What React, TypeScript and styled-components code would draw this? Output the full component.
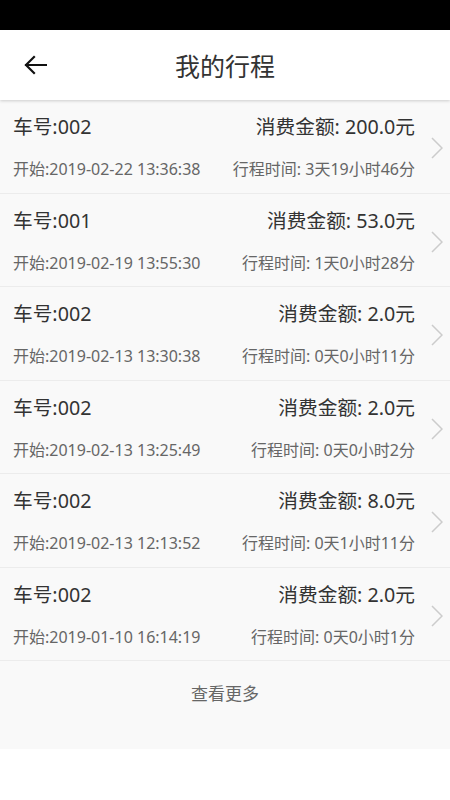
import React from "react";
import styled, { createGlobalStyle } from "styled-components";

const GlobalStyle = createGlobalStyle`
  html, body { margin: 0; padding: 0; background: #ffffff; }
  body { font-family: "Noto Sans", "Noto Sans CJK SC", sans-serif; }
  * { box-sizing: border-box; }
`;

const Page = styled.div`
  width: 450px;
  height: 800px;
  display: flex;
  flex-direction: column;
  background: #ffffff;
`;

const StatusBar = styled.div`
  height: 30px;
  background: #000000;
  flex-shrink: 0;
`;

const Header = styled.header`
  height: 70px;
  background: #ffffff;
  position: relative;
  z-index: 1;
  box-shadow: 0 1px 3px rgba(0, 0, 0, 0.18);
  display: grid;
  grid-template-columns: 70px 1fr 70px;
  align-items: center;
  flex-shrink: 0;
`;

const BackButton = styled.button`
  border: none;
  background: none;
  padding: 0 0 0 23px;
  height: 100%;
  display: flex;
  align-items: center;
  cursor: pointer;
`;

const Title = styled.h1`
  margin: 0;
  text-align: center;
  font-family: "Noto Sans", "Noto Sans CJK SC", sans-serif;
  font-weight: 400;
  font-size: 25px;
  line-height: 30px;
  color: #333333;
  padding-top: 2px;
`;

const List = styled.div`
  background: #f9f9f9;
  display: flex;
  flex-direction: column;
`;

const Row = styled.div`
  height: 93.5px;
  border-bottom: 1px solid #ececec;
  display: flex;
  align-items: center;
  padding: 0 7px 0 13px;
`;

const Info = styled.div`
  flex: 1;
  display: flex;
  flex-direction: column;
  padding-top: 2px;
`;

const Line = styled.div<{ $small?: boolean }>`
  display: flex;
  justify-content: space-between;
  align-items: center;
  font-size: ${(p) => (p.$small ? "16px" : "19.7px")};
  color: ${(p) => (p.$small ? "#666666" : "#333333")};
  height: ${(p) => (p.$small ? "26px" : "30px")};
  line-height: ${(p) => (p.$small ? "26px" : "30px")};
  margin-top: ${(p) => (p.$small ? "14px" : "0")};
  white-space: nowrap;
`;

const Chevron = styled.div`
  width: 20px;
  display: flex;
  justify-content: flex-end;
  margin-left: 8px;
  padding-top: 4px;
`;

const More = styled.div`
  height: 88px;
  display: flex;
  justify-content: center;
  padding-top: 21px;
  font-size: 17px;
  line-height: 24px;
  color: #666666;
`;

type Trip = { car: string; fee: string; start: string; dur: string };

const trips: Trip[] = [
  { car: "002", fee: "200.0", start: "2019-02-22 13:36:38", dur: "3天19小时46分" },
  { car: "001", fee: "53.0", start: "2019-02-19 13:55:30", dur: "1天0小时28分" },
  { car: "002", fee: "2.0", start: "2019-02-13 13:30:38", dur: "0天0小时11分" },
  { car: "002", fee: "2.0", start: "2019-02-13 13:25:49", dur: "0天0小时2分" },
  { car: "002", fee: "8.0", start: "2019-02-13 12:13:52", dur: "0天1小时11分" },
  { car: "002", fee: "2.0", start: "2019-01-10 16:14:19", dur: "0天0小时1分" },
];

export default function App() {
  return (
    <Page>
      <GlobalStyle />
      <StatusBar />
      <Header>
        <BackButton aria-label="back">
          <svg width="24" height="20" viewBox="0 0 24 20">
            <path
              d="M23 10H3M11 2L3 10L11 18"
              fill="none"
              stroke="#111"
              strokeWidth="2.2"
              strokeLinecap="square"
            />
          </svg>
        </BackButton>
        <Title>我的行程</Title>
        <div />
      </Header>
      <List>
        {trips.map((t, i) => (
          <Row key={i}>
            <Info>
              <Line>
                <span>车号:{t.car}</span>
                <span>消费金额: {t.fee}元</span>
              </Line>
              <Line $small>
                <span>开始:{t.start}</span>
                <span>行程时间: {t.dur}</span>
              </Line>
            </Info>
            <Chevron>
              <svg width="12" height="22" viewBox="0 0 12 22">
                <path d="M1 1L11 11L1 21" fill="none" stroke="#cccccc" strokeWidth="1.5" />
              </svg>
            </Chevron>
          </Row>
        ))}
        <More>查看更多</More>
      </List>
    </Page>
  );
}
